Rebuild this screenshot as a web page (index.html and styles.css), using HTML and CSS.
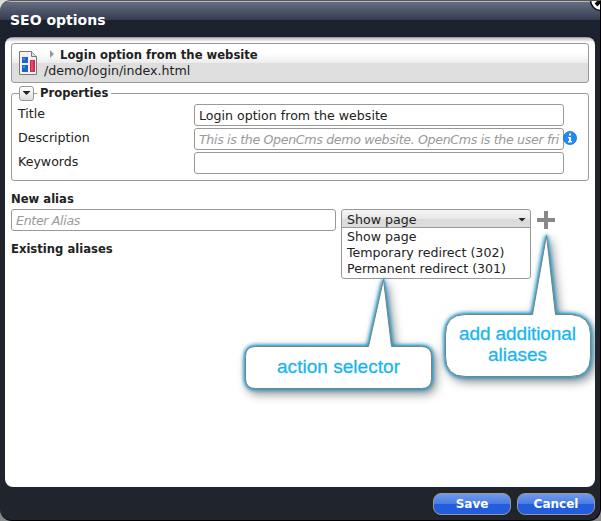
FILE: index.html
```
<!DOCTYPE html>
<html lang="en">
<head>
<meta charset="utf-8">
<title>SEO options</title>
<link rel="stylesheet" href="styles.css">
</head>
<body>
<main class="dialog">
  <header class="caption">SEO options</header>
  <svg class="close" width="24" height="24" viewBox="0 0 24 24"><circle cx="12" cy="12" r="10.5" fill="#fff" stroke="#111" stroke-width="1.5"/><path d="M7 17L17 7M7 7l10 10" stroke="#080808" stroke-width="4"/></svg>
  <section class="panel">
    <div class="page-info">
      <svg class="page-icon" width="18" height="24" viewBox="0 0 18 24"><path d="M.5.5h12l5 5v18H.5z" fill="#f3f3f3" stroke="#777"/><path d="M12.5.5v5h5" fill="#ddd" stroke="#777"/><path d="M3 6h6v6H3zM3 14h6v7H3z" fill="#1e62d6"/><path d="M4 7h2v2H4zM4 15h2v2H4z" fill="#4c8cec"/><path d="M11 9h5v12h-5z" fill="#d5264e"/><path d="M12 10h2v10h-2z" fill="#e34c70"/></svg>
      <div class="page-text">
        <div class="page-title"><i class="arrow-right"></i><b>Login option from the website</b></div>
        <div class="page-path">/demo/login/index.html</div>
      </div>
    </div>
    <fieldset class="properties">
      <legend><span class="toggle"><i class="arrow-down"></i></span><i class="dash"></i><b>Properties</b></legend>
      <div class="row"><label>Title</label><div class="field">Login option from the website</div></div>
      <div class="row"><label>Description</label><div class="field hint desc">This is the OpenCms demo website. OpenCms is the user fri</div>
        <svg class="info" width="14" height="14" viewBox="0 0 14 14"><circle cx="7" cy="7" r="6.6" fill="#218af4" stroke="#1c6fd7" stroke-width=".7"/><path d="M6 2.5h2v2H6zM5 6h3v4h1v1.5H5V10h1V7.3H5z" fill="#fff"/></svg></div>
      <div class="row"><label>Keywords</label><div class="field"></div></div>
    </fieldset>
    <h2 class="new-title">New alias</h2>
    <div class="alias-row">
      <div class="field alias hint">Enter Alias</div>
      <div class="select">
        <div class="opener">Show page<i class="arrow-down"></i></div>
        <ul class="menu"><li>Show page</li><li>Temporary redirect (302)</li><li>Permanent redirect (301)</li></ul>
      </div>
      <i class="plus"></i>
    </div>
    <h2 class="existing-title">Existing aliases</h2>
  </section>
  <footer class="actions"><button>Save</button><button>Cancel</button></footer>
</main>
<svg class="callouts" width="595" height="487" viewBox="0 0 595 487">
  <g class="bubble">
    <path d="M255.500 346.500H368.500L383.500 279.500L391.500 346.500H421.500Q431.500 346.500 431.500 356.500V378.500Q431.500 388.500 421.500 388.500H255.500Q245.500 388.500 245.500 378.500V356.500Q245.500 346.500 255.500 346.500Z"/>
    <path d="M465.500 314.500H532.500L546.500 235.500L555.500 314.500H571Q590.500 316 590.500 334.500V356.500Q590.500 376.500 570.500 376.500H465.500Q445.500 376.500 445.500 356.500V334.500Q445.500 314.500 465.500 314.500Z"/>
  </g>
  <g class="note">
    <text x="277" y="373" textLength="123">action selector</text>
    <text x="459" y="340" textLength="117">add additional</text>
    <text x="488" y="361" textLength="59">aliases</text>
  </g>
</svg>
</body>
</html>
```
FILE: styles.css
```
* { box-sizing: border-box; }
body {
  margin: 0;
  width: 601px;
  height: 521px;
  overflow: hidden;
  background: linear-gradient(#ddd, #888);
  font: 12.6px/16px "DejaVu Sans", sans-serif;
  color: #222;
}
b, h2 { font: bold 12.9px/16px "DejaVu Sans Condensed", "DejaVu Sans", sans-serif; }
.dialog {
  position: relative;
  width: 601px;
  height: 521px;
  padding: 0 5px 0 5px;
  border-top: 1px solid #555;
  border-right: 1px solid #000;
  border-bottom: 1px solid #000;
  border-radius: 11px 0 12px 12px;
  background: linear-gradient(#bbb 0 1px, #656d83 1px, #343c4e 19px, #1b212d 19px, #1b212d 36px, #20242c 60px);
  overflow: hidden;
}
.caption {
  height: 36px;
  padding: 10px 5px 0;
  color: #fff;
  font: bold 14px/18px "DejaVu Sans", sans-serif;
}
.close { position: absolute; top: -13px; right: -13px; }
.panel {
  height: 450px;
  padding: 6px;
  border-radius: 8px;
  background: linear-gradient(#77777c 0, #c8c2c2 1px, #ddd 3px, #fff 5px);
}
.page-info {
  display: flex;
  height: 40px;
  padding: 7px;
  border: 1px solid #999;
  border-radius: 3px;
  background: linear-gradient(#fff 0 9px, #ececec 19px, #dedede 19px);
}
.page-text { margin: -4px 0 0 7px; }
.page-title { display: flex; align-items: center; height: 16px; }
.page-path { line-height: 15px; }
.arrow-right {
  margin: -3px 6px 0 6px;
  border: solid transparent;
  border-width: 4px 0 4px 4px;
  border-left-color: #999;
}
.properties {
  position: relative;
  height: 98px;
  margin: 0;
  padding: 0 5px;
  border: 1px solid #999;
  border-radius: 3px;
}
legend { display: flex; align-items: center; height: 20px; padding: 0 3px 0 0; margin-left: 2px; }
.toggle {
  display: grid;
  place-items: center;
  width: 15px;
  height: 15px;
  border: 1px solid #999;
  border-radius: 3px;
  background: linear-gradient(#fff, #ddd);
}
.dash { width: 3px; height: 1px; margin-right: 3px; background: #999; }
.arrow-down {
  width: 8px;
  height: 4px;
  background: #222;
  clip-path: polygon(0 0, 100% 0, 50% 100%);
}
.row { display: flex; height: 24px; margin-top: 1px; }
.row + .row { margin-top: 0; }
.row label { width: 177px; padding: 2px 1px; }
.field {
  width: 370px;
  height: 22px;
  padding: 3px 4px 1px;
  border: 1px solid #999;
  border-radius: 3px;
  background: #fff;
  white-space: nowrap;
}
.hint { color: #999; font-style: italic; letter-spacing: -.33px; }
.desc { padding-right: 1px; }
.info { margin: 3px 0 0 -1px; }
h2 { margin: 0; }
.new-title { margin-top: 10px; }
.alias-row { display: flex; height: 22px; margin-top: 2px; }
.alias { width: 325px; }
.select { position: relative; width: 190px; margin: 0 6px 0 5px; }
.opener {
  display: flex;
  justify-content: space-between;
  align-items: center;
  height: 19px;
  padding: 2px 4px 0 5px;
  border: 1px solid #999;
  border-radius: 3px 3px 0 0;
  background: linear-gradient(#f5f5f5, #e8e8e8 50%, #dadada 51%, #ddd);
}
.menu {
  position: absolute;
  top: 18px;
  left: 0;
  width: 190px;
  height: 52px;
  margin: 0;
  padding: 1px 5px;
  border: 1px solid #999;
  border-radius: 0 0 3px 3px;
  background: #fff;
  list-style: none;
}
.plus {
  width: 18px;
  height: 18px;
  margin-top: 2px;
  background: linear-gradient(#888, #888) center / 18px 4px no-repeat, linear-gradient(#888, #888) center / 4px 18px no-repeat;
}
.existing-title { margin-top: 10px; }
.actions { display: flex; justify-content: flex-end; gap: 6px; padding-top: 6px; }
button {
  width: 78px;
  height: 22px;
  padding: 0;
  border: 1px solid #999;
  border-radius: 8px;
  background: linear-gradient(#7199e9, #4a7de4 48%, #225ddd 52%, #225ddd);
  color: #fff;
  font: bold 12px/20px "DejaVu Sans", sans-serif;
}
.callouts { position: absolute; top: 0; left: 0; pointer-events: none; }
.bubble path {
  fill: #fff;
  stroke: #808080;
  filter: drop-shadow(0 0 2px #189bce) drop-shadow(0 0 1px #189bce) drop-shadow(3px 4px 4px #0006);
}
.note { fill: #19b5f1; stroke: #19b5f1; stroke-width: .3px; font: 19px "Liberation Sans", Arial, sans-serif; }
```
